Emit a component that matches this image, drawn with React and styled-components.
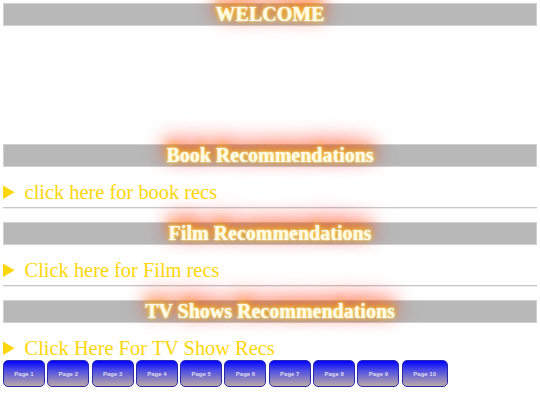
import styled, { createGlobalStyle } from "styled-components";

const GlobalStyle = createGlobalStyle`
	html, body {
		margin: 0;
		padding: 0;
		background: #ffffff;
	}
	body {
		font-family: "Liberation Serif", "Times New Roman", serif;
	}
`;

const Page = styled.div`
	display: flex;
	flex-direction: column;
	padding: 3px 3px 0;
`;

const Heading = styled.h1`
	margin: 0;
	height: 23px;
	box-sizing: border-box;
	border: 1px solid #d2d2d2;
	background-color: #b8b8b8;
	display: flex;
	align-items: center;
	justify-content: center;
	font-family: "Liberation Serif", "Times New Roman", serif;
	font-weight: 700;
	font-size: 20px;
	line-height: 23px;
	color: #fffbe6;
	text-shadow: 0 0 2px #fff, 0 0 5px #ffe600, 0 -4px 10px #ff9900,
		0 -6px 18px #ff2a00, 0 -8px 24px #ff3300;
`;

const Spacer = styled.div`
	height: ${(props) => props.h}px;
`;

const Section = styled.details`
	margin-top: 14px;
	color: #ffd60a;
	font-size: 20.4px;
	line-height: 23px;
`;

const Summary = styled.summary`
	cursor: pointer;
	white-space: nowrap;
`;

const Rule = styled.hr`
	margin: 3px 0 13px;
	height: 0;
	border: none;
	border-top: 1px solid #c8c8c8;
	border-bottom: 1px solid #ececec;
`;

const Pager = styled.div`
	display: flex;
	gap: 2.3px;
`;

const PageButton = styled.button`
	width: ${(props) => (props.$wide ? 46 : 42)}px;
	height: 27px;
	padding: 0;
	border: 1px solid #2a2aa8;
	border-radius: 5px;
	background: linear-gradient(to bottom, #0000ff 0%, #4848e6 35%, #bcaaa6 100%);
	color: #dcdcec;
	font-family: "Liberation Sans", Arial, sans-serif;
	font-size: 6px;
	font-weight: 700;
	white-space: nowrap;
	cursor: pointer;
`;

const sections = [
	{ title: "Book Recommendations", link: "click here for book recs" },
	{ title: "Film Recommendations", link: "Click here for Film recs" },
	{ title: "TV Shows Recommendations", link: "Click Here For TV Show Recs" },
];

const App = () => {
	const pages = Array.from({ length: 10 }, (_, i) => i + 1);
	return (
		<Page>
			<GlobalStyle />
			<Heading>WELCOME</Heading>
			<Spacer h={118} />
			{sections.map((s, i) => (
				<div key={s.title}>
					<Heading>{s.title}</Heading>
					<Section>
						<Summary>{s.link}</Summary>
					</Section>
					{i < sections.length - 1 && <Rule />}
				</div>
			))}
			<Pager>
				{pages.map((p) => (
					<PageButton key={p} $wide={p >= 10}>
						Page {p}
					</PageButton>
				))}
			</Pager>
		</Page>
	);
};

export default App;
